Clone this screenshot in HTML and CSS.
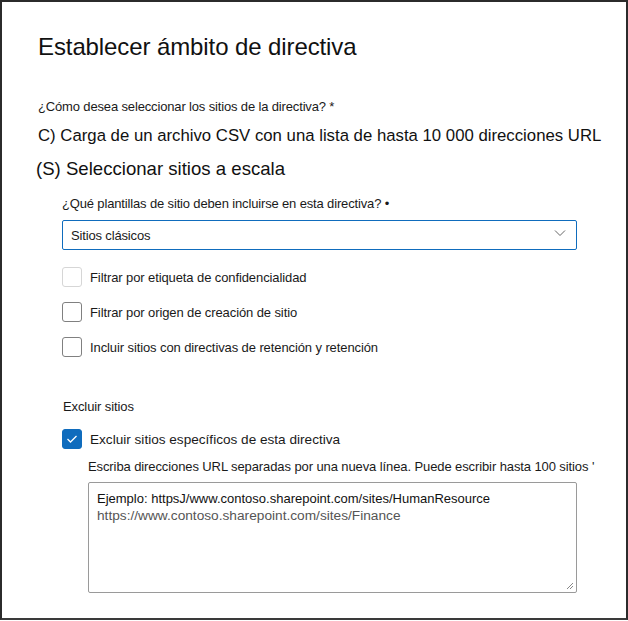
FILE: index.html
```html
<!DOCTYPE html>
<html lang="es">
<head>
<meta charset="utf-8">
<link rel="stylesheet" href="styles.css">
</head>
<body>
<div class="frame">
  <h1 class="title">Establecer ámbito de directiva</h1>
  <div class="question">¿Cómo desea seleccionar los sitios de la directiva? *</div>
  <div class="option opt-c">C) Carga de un archivo CSV con una lista de hasta 10 000 direcciones URL</div>
  <div class="option opt-s">(S) Seleccionar sitios a escala</div>
  <div class="section">
    <div class="sublabel">¿Qué plantillas de sitio deben incluirse en esta directiva? •</div>
    <div class="dropdown">
      <span>Sitios clásicos</span>
      <svg class="chev" width="12" height="8" viewBox="0 0 12 8"><path d="M1 1.5 L6 6.5 L11 1.5" fill="none" stroke="#666" stroke-width="1"/></svg>
    </div>
    <div class="checks">
      <div class="check"><span class="box disabled"></span><span class="lbl">Filtrar por etiqueta de confidencialidad</span></div>
      <div class="check"><span class="box"></span><span class="lbl">Filtrar por origen de creación de sitio</span></div>
      <div class="check"><span class="box"></span><span class="lbl">Incluir sitios con directivas de retención y retención</span></div>
    </div>
    <div class="exclude-title">Excluir sitios</div>
    <div class="check checked-row"><span class="box checked"><svg width="12" height="10" viewBox="0 0 12 10"><path d="M1.5 5 L4.5 8 L10.5 2" fill="none" stroke="#fff" stroke-width="1.3"/></svg></span><span class="lbl lbl-big">Excluir sitios específicos de esta directiva</span></div>
    <div class="urls">
      <div class="hint">Escriba direcciones URL separadas por una nueva línea. Puede escribir hasta 100 sitios '</div>
      <div class="textarea">
        <div class="l1">Ejemplo: httpsJ/www.contoso.sharepoint.com/sites/HumanResource</div>
        <div class="l2">https://www.contoso.sharepoint.com/sites/Finance</div>
        <svg class="grip" width="8" height="8" viewBox="0 0 8 8"><path d="M7 1 L1 7 M7 4 L4 7" stroke="#888" stroke-width="1"/></svg>
      </div>
    </div>
  </div>
</div>
</body>
</html>
```

FILE: styles.css
```css
* { box-sizing: border-box; }
html, body { margin: 0; padding: 0; background: #fff; }
body { font-family: "Liberation Sans", Arial, sans-serif; color: #1a1a1a; }
.frame {
  width: 628px;
  height: 620px;
  border: 2px solid #2b2b2b;
  border-bottom-color: #3a3a3a;
  padding: 31px 0 0 36px;
  position: relative;
}
.title {
  margin: 0;
  font-weight: normal;
  font-size: 24px;
  line-height: 28px;
  color: #111;
  letter-spacing: -0.1px;
}
.question {
  margin-top: 38px;
  font-size: 13px;
  line-height: 16px;
  letter-spacing: -0.15px;
}
.option { color: #111; }
.opt-c {
  margin-top: 10px;
  font-size: 16.75px;
  line-height: 22px;
}
.opt-s {
  margin-top: 10px;
  margin-left: -2px;
  font-size: 18.6px;
  line-height: 24px;
}
.section { padding-left: 24px; }
.sublabel {
  margin-top: 15px;
  font-size: 13px;
  line-height: 16px;
  letter-spacing: -0.15px;
}
.dropdown {
  margin-top: 8px;
  width: 515px;
  height: 30px;
  border: 1.5px solid #0f6cbd;
  border-radius: 2px;
  display: flex;
  align-items: center;
  justify-content: space-between;
  padding: 0 10px 0 8px;
  font-size: 13px;
  letter-spacing: -0.15px;
}
.chev { margin-top: -4px; }
.checks { margin-top: 17px; display: flex; flex-direction: column; gap: 15px; }
.check { display: flex; align-items: center; gap: 8px; height: 20px; }
.box {
  width: 20px; height: 20px;
  border: 1px solid #808080;
  border-radius: 3px;
  display: flex; align-items: center; justify-content: center;
  flex: none;
}
.box.disabled { border-color: #d6d6d6; }
.box.checked { background: #0f6cbd; border-color: #0f6cbd; }
.lbl { font-size: 13px; letter-spacing: -0.1px; }
.lbl-big { font-size: 13.6px; letter-spacing: 0; }
.exclude-title {
  margin-top: 42px;
  margin-left: 1px;
  font-size: 13px;
  line-height: 16px;
  letter-spacing: -0.1px;
}
.checked-row { margin-top: 14px; }
.urls { padding-left: 26px; }
.hint {
  margin-top: 10px;
  font-size: 13px;
  line-height: 16px;
  letter-spacing: -0.1px;
}
.textarea {
  margin-top: 7px;
  width: 489px;
  height: 111px;
  border: 1px solid #9a9a9a;
  border-radius: 2px;
  padding: 7px 8px;
  line-height: 17px;
  position: relative;
}
.l1 { color: #111; font-size: 13px; }
.l2 { color: #555; font-size: 13.7px; }
.grip { position: absolute; right: 2px; bottom: 2px; }
```
